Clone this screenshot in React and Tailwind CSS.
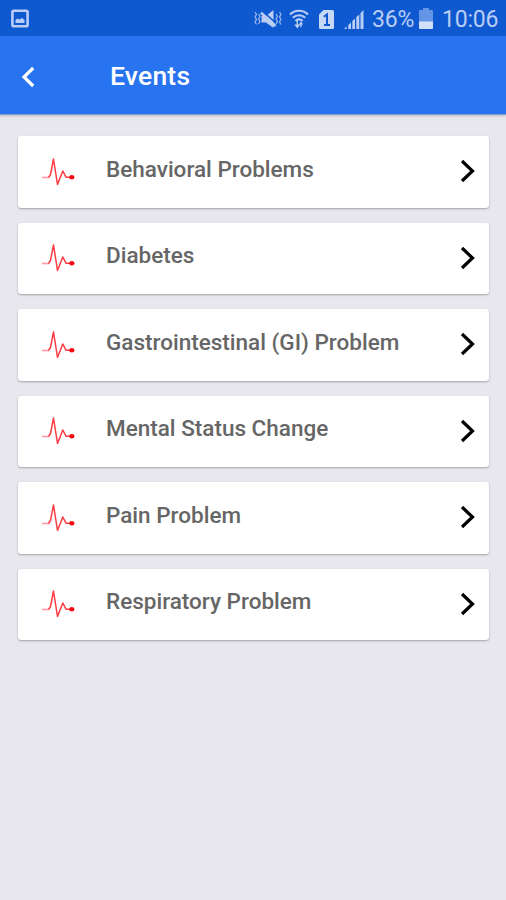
const events = [
  'Behavioral Problems',
  'Diabetes',
  'Gastrointestinal (GI) Problem',
  'Mental Status Change',
  'Pain Problem',
  'Respiratory Problem',
];

const PictureIcon = () => (
  <svg className="ml-[11px]" width="18" height="19" viewBox="0 0 18 19" fill="none">
    <rect x="1.4" y="1.7" width="15.2" height="15.6" rx="1.5" stroke="#b9cdf5" strokeWidth="2.6" />
    <path d="M4.500 14v-3l2-1.500 2 1 2.500-1.500 2.500 2v3z" fill="#b9cdf5" />
  </svg>
);

const MuteVibrateIcon = () => (
  <svg width="28" height="20" viewBox="0 0 28 20" fill="none">
    <path d="M7.500 7H12L19.500 1v18L12 13.500H7.500z" fill="#b9cdf5" />
    <path d="M8.500 2.200L23 15" stroke="#0f59d0" strokeWidth="1.600" />
    <path d="M7 3.800L21.500 17" stroke="#b9cdf5" strokeWidth="2.600" />
    <path d="M1 3l1.500 2.500L1 8l1.500 2.500L1 13l1.500 2.500M4.500 5L6 7.500 4.500 10 6 12.500 4.500 15M22 5l1.500 2.500L22 10l1.500 2.500L22 15M25.500 3L27 5.500 25.500 8l1.500 2.500-1.500 2.500 1.500 2.500" stroke="#9dbaf0" strokeWidth="1.200" />
  </svg>
);

const WifiIcon = () => (
  <svg width="20" height="20" viewBox="0 0 20 20" fill="none" stroke="#b9cdf5">
    <path d="M1 5.500C6 .5 14 .5 19 5.500M3.800 8.800c3.500-3.400 8.900-3.400 12.400 0M6.500 12c2-2.200 5-2.200 7 0" strokeWidth="2.200" />
    <path d="M8.300 12v5.500M12 18v-4.500" strokeWidth="1.400" />
    <path d="M5.300 15.500h6l-3 4zM9.800 15.500L12 12.500l2.200 3z" fill="#b9cdf5" stroke="none" />
  </svg>
);

const SimIcon = () => (
  <svg width="15" height="19" viewBox="0 0 15 19" fill="none">
    <path d="M4.500 0h9Q15 0 15 1.500v16q0 1.500-1.500 1.500h-12Q0 19 0 17.500v-13z" fill="#c6d7f8" />
    <path d="M4.800 6.800L8 4.500V15M5 15h6" stroke="#0f59d0" strokeWidth="2" />
  </svg>
);

const SignalIcon = () => (
  <svg width="20" height="19" viewBox="0 0 20 19" fill="#b9cdf5">
    <path d="M0 19l2.500-2.500V19zM4.300 15L7 12.500V19H4.300zM8.300 11L11 8.500V19H8.300zM12.300 7l3-2.500V19h-3zM16.500 3l3-3v19h-3z" />
  </svg>
);

const BatteryIcon = () => (
  <svg width="14" height="21" viewBox="0 0 14 21">
    <path d="M4 0h6v2h3q1 0 1 1v11H0V3q0-1 1-1h3z" fill="#6494e5" />
    <path d="M0 13.500h14V20q0 1-1 1H1q-1 0-1-1z" fill="#d3e0fa" />
  </svg>
);

const PulseIcon = () => (
  <svg className="ml-[24px] mb-[2px] shrink-0" width="34" height="30" viewBox="0 0 34 30" fill="none">
    <path d="M0 21.500h7" stroke="#ff9aa0" strokeWidth="1.600" />
    <path d="M6.500 21.500l2-3L11.500 3l4 25.500L20.800 15l3.200 6.200h6" stroke="#fb3c44" strokeWidth="1.500" strokeLinejoin="round" />
    <ellipse cx="29.800" cy="21.200" rx="2.600" ry="2.200" fill="#fb0711" />
  </svg>
);

const StatusBar = () => (
  <div className="h-9 bg-[#0f59d0] flex items-center justify-between text-[#b9cdf5]">
    <PictureIcon />
    <div className="flex items-center h-full pt-0.5 pr-2">
      <MuteVibrateIcon />
      <div className="ml-[7px] flex"><WifiIcon /></div>
      <div className="ml-[10px] flex"><SimIcon /></div>
      <div className="ml-[10px] flex"><SignalIcon /></div>
      <span className="ml-[8px] w-[42px] text-[23px] leading-none whitespace-nowrap tracking-[-0.2px]">36%</span>
      <div className="ml-[5px] flex -mt-0.5"><BatteryIcon /></div>
      <span className="ml-[9px] w-[56px] text-[23px] leading-none whitespace-nowrap tracking-[-0.2px]">10:06</span>
    </div>
  </div>
);

const Header = () => (
  <header className="h-[79px] bg-[#2874f0] flex items-center border-b border-[#7f9fd8] shadow-[0_1px_2px_rgba(0,0,0,0.2)]">
    <button className="ml-[21px] mt-[3px]">
      <svg width="14" height="22" viewBox="0 0 14 22" fill="none">
        <path d="M12.200 2L3 11l9.200 9" stroke="#fff" strokeWidth="3.200" />
      </svg>
    </button>
    <h1 className="ml-[75px] mt-[3px] text-[26.500px] leading-none font-medium tracking-[0.2px] text-white">Events</h1>
  </header>
);

const EventCard = ({ name }) => (
  <li className="h-[71.500px] flex items-center bg-white rounded-[3px] shadow-[0_1px_2px_rgba(0,0,0,0.3)]">
    <PulseIcon />
    <span className="ml-[30px] mb-[5.500px] flex-1 text-[22.500px] leading-none font-medium text-[#666] whitespace-nowrap">{name}</span>
    <svg className="mr-[13px] mb-px shrink-0" width="16" height="24" viewBox="0 0 16 24" fill="none">
      <path d="M2 2l10.500 10L2 22" stroke="#000" strokeWidth="3.200" />
    </svg>
  </li>
);

const App = () => {
  return (
    <div className="w-full h-[900px] overflow-hidden bg-[#e8e7ed] font-['Roboto',sans-serif]">
      <StatusBar />
      <Header />
      <ul className="pt-[21px] pl-[18px] pr-[17px] flex flex-col gap-[15px]">
        {events.map((name) => (
          <EventCard key={name} name={name} />
        ))}
      </ul>
    </div>
  );
};

export default App;
